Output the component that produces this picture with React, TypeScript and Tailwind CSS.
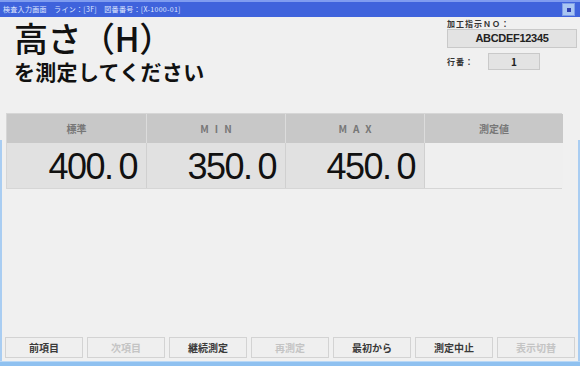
import React from 'react';

const jp = "font-['Noto_Sans_CJK_JP','Noto_Sans',sans-serif]";

const buttons: { label: string; enabled: boolean }[] = [
  { label: '前項目', enabled: true },
  { label: '次項目', enabled: false },
  { label: '継続測定', enabled: true },
  { label: '再測定', enabled: false },
  { label: '最初から', enabled: true },
  { label: '測定中止', enabled: true },
  { label: '表示切替', enabled: false },
];

const columns = [
  { head: '標準', value: '400.0', spaced: false },
  { head: 'MIN', value: '350.0', spaced: true },
  { head: 'MAX', value: '450.0', spaced: true },
  { head: '測定値', value: '', spaced: false },
];

const Value: React.FC<{ v: string }> = ({ v }) => {
  const [a, b] = v.split('.');
  return (
    <span className="font-['Liberation_Sans',sans-serif] text-[36px] leading-none text-[#111] tracking-[-1.5px]">
      {a}<span className="mr-[6px]">.</span>{b}
    </span>
  );
};

const App: React.FC = () => {
  return (
    <div className={`w-[580px] h-[366px] flex flex-col bg-[#f0f0f0] overflow-hidden ${jp}`}>
      {/* title bar */}
      <div className="h-[17px] shrink-0 border-t-2 border-[#7f9cf0] bg-[#3f63dc] flex items-center justify-between pl-[3px] pr-[5px]">
        <span className="text-[7px] leading-none text-[#dfe6ff] whitespace-nowrap tracking-[0.3px]">
          検査入力画面　ライン：[3F]　図番番号：[X-1000-01]
        </span>
        <div className="w-[13px] h-[13px] bg-[#a9c6f2] border border-[#7f9ee8] flex items-center justify-center">
          <div className="w-[4px] h-[4px] bg-[#2e3fb0]" />
        </div>
      </div>

      {/* body with side frame */}
      <div className="flex-1 flex flex-col px-[2px] bg-[linear-gradient(to_bottom,#f0f0f0_0,#f0f0f0_123px,#a9cdf2_123px)]">
        <div className="flex-1 flex flex-col bg-[#f0f0f0]">
          <div className="flex justify-between">
            <div className="pl-[12px] pt-[3px]">
              <div className="text-[34px] leading-[36px] font-medium text-[#111] tracking-[-0.5px]">高さ（H）</div>
              <div className="text-[21px] leading-[24px] font-bold text-[#111] mt-[3px] tracking-[0.3px]">を測定してください</div>
            </div>
            <div className="w-[130px] mr-[1px] pt-[2px] text-[#333]">
              <div className="text-[8px] leading-[10px] font-bold tracking-[1px]">加工指示ＮＯ：</div>
              <div className="h-[19px] bg-[#e3e3e3] border border-[#c9c9c9] flex items-center justify-center text-[11px] font-bold text-[#222] font-['Liberation_Sans',sans-serif] tracking-[-0.3px]">
                ABCDEF12345
              </div>
              <div className="flex items-center mt-[5px]">
                <span className="text-[8px] font-bold w-[41px] tracking-[1px]">行番：</span>
                <div className="w-[52px] h-[17px] bg-[#e3e3e3] border border-[#c9c9c9] flex items-center justify-center text-[10px] font-bold text-[#222]">
                  1
                </div>
              </div>
            </div>
          </div>

          {/* table */}
          <div className="mt-[30px] ml-[4px] w-[556px] grid grid-cols-[139px_139px_139px_139px] border border-[#d6d6d6]">
            {columns.map((c, i) => (
              <div
                key={'h' + i}
                className={`h-[29px] bg-[#c8c8c8] flex items-center justify-center text-[10px] text-[#777] font-bold ${i > 0 ? 'border-l border-[#dcdcdc]' : ''} ${c.spaced ? 'tracking-[6px] pl-[6px]' : ''}`}
              >
                {c.head}
              </div>
            ))}
            {columns.map((c, i) => (
              <div
                key={'v' + i}
                className={`h-[45px] flex items-center justify-end pr-[9px] pt-[2px] ${i === 3 ? 'bg-[#efefef]' : 'bg-[#e1e1e1]'} ${i > 0 ? 'border-l border-[#d0d0d0]' : ''}`}
              >
                {c.value && <Value v={c.value} />}
              </div>
            ))}
          </div>

          <div className="flex-1" />

          {/* button row */}
          <div className="flex gap-[4px] pl-[3px] mb-[3px]">
            {buttons.map((b) => (
              <div
                key={b.label}
                className={`w-[78px] h-[21px] bg-[#efefef] border border-[#d3d3d3] flex items-center justify-center text-[10px] font-bold ${b.enabled ? 'text-[#3a3a3a]' : 'text-[#c4c4c4]'}`}
              >
                {b.label}
              </div>
            ))}
          </div>
        </div>
      </div>

      {/* bottom frame */}
      <div className="h-[5px] shrink-0 bg-[#8fc1f0] border-t border-[#b9d8f6]" />
    </div>
  );
};

export default App;
